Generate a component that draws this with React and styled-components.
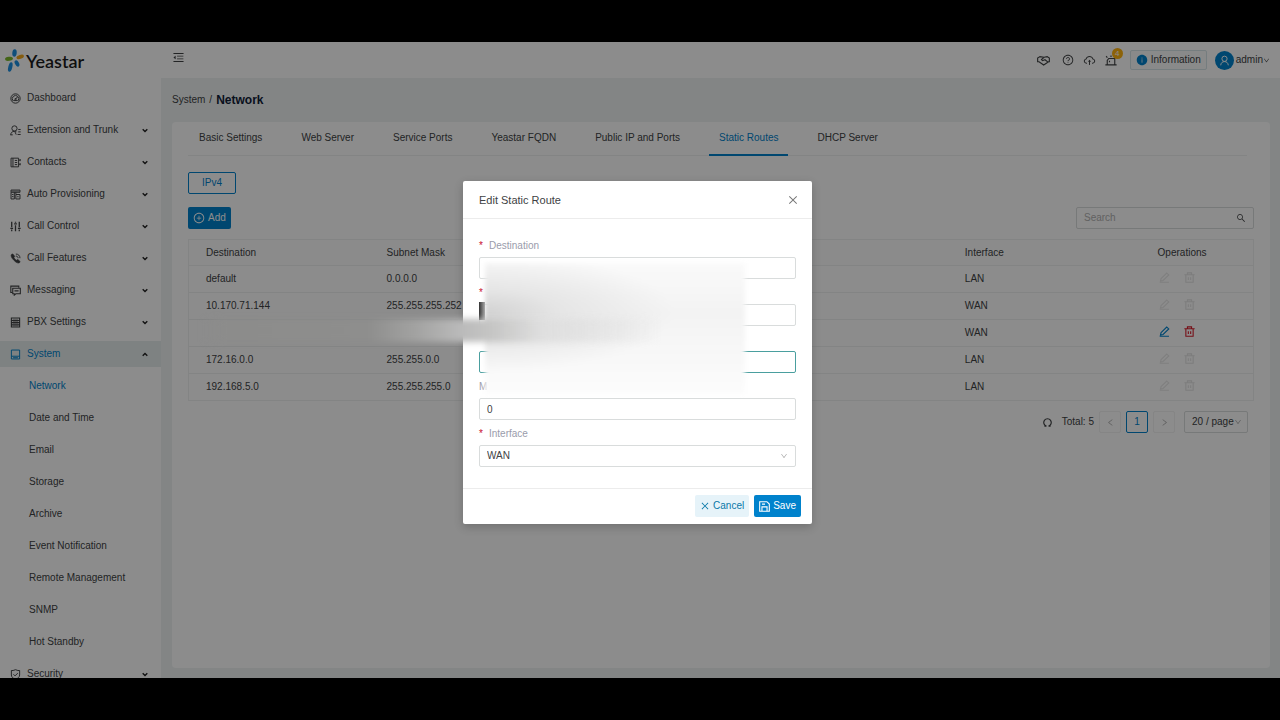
import React, { useState } from "react";
import styled, { createGlobalStyle } from "styled-components";
import {
  AiOutlineMenuFold,
  AiOutlineQuestionCircle,
  AiOutlineCloudUpload,
  AiOutlinePlusCircle,
  AiOutlineSearch,
  AiOutlineClose,
  AiOutlineDown,
  AiOutlineLeft,
  AiOutlineRight,
  AiFillInfoCircle,
} from "react-icons/ai";

const GlobalStyle = createGlobalStyle`
  * {
    box-sizing: border-box;
  }

  body {
    margin: 0;
    background: #000;
    color: #404244;
    font-family: "Liberation Sans", Arial, sans-serif;
    font-size: 10px;
    line-height: 16px;
  }

  button, input, select {
    font: inherit;
    color: inherit;
    margin: 0;
  }

  a {
    color: inherit;
    text-decoration: none;
  }
`;

const PRIMARY = "#0082cc";
const BORDER = "#d9dcdc";
const LINE = "#eff1f1";

const Screen = styled.div`
  height: 100vh;
  padding: 42px 0;
`;

const Stage = styled.div`
  position: relative;
  display: flex;
  height: 100%;
  overflow: hidden;
  background: #eff3f3;
`;

/* ---------- sidebar ---------- */

const Sidebar = styled.aside`
  flex: none;
  width: 161px;
  background: #fff;
  overflow: hidden;
`;

const Brand = styled.a`
  display: flex;
  align-items: center;
  gap: 2px;
  height: 38px;
  padding-left: 5px;
  color: #1c1c1c;
  font-family: Lato, sans-serif;
  font-size: 18px;
  font-weight: 600;
`;

const MenuList = styled.ul`
  display: grid;
  gap: 6px;
  margin: 0;
  padding: 5px 0 0;
  list-style: none;
`;

const MenuLink = styled.a`
  display: flex;
  align-items: center;
  gap: 6px;
  height: 26px;
  padding: 0 13px 0 ${(props) => (props.$sub ? "29px" : "10px")};
  color: ${(props) => (props.$active ? PRIMARY : "inherit")};
  ${(props) => props.$open && `background: #e6eded; color: ${PRIMARY};`}
`;

const MenuText = styled.span`
  flex: 1;
  white-space: nowrap;
`;

const Chevron = styled.svg`
  color: #222;
  transform: ${(props) => (props.$up ? "rotate(180deg)" : "none")};
`;

/* ---------- header ---------- */

const Main = styled.div`
  flex: 1;
  min-width: 0;
  display: flex;
  flex-direction: column;
`;

const Header = styled.header`
  display: flex;
  align-items: center;
  justify-content: space-between;
  height: 36px;
  padding: 0 10px 0 11px;
  background: #fff;
`;

const HeaderTools = styled.div`
  display: flex;
  align-items: center;
  gap: 9px;
`;

const IconButton = styled.button`
  position: relative;
  display: flex;
  align-items: center;
  padding: 0;
  border: 0;
  background: none;
  color: ${(props) => props.$color || "#404244"};
  cursor: pointer;
`;

const MenuToggle = styled(IconButton)`
  align-self: flex-start;
  height: 31px;
`;

const PartnerButton = styled(IconButton)`
  margin-right: 3px;
`;

const Badge = styled.span`
  position: absolute;
  top: -6px;
  right: -6px;
  width: 11px;
  height: 11px;
  border-radius: 50%;
  background: #ffb310;
  color: #fff;
  font-size: 8px;
  line-height: 11px;
  text-align: center;
`;

const InfoButton = styled.button`
  display: flex;
  align-items: center;
  gap: 3px;
  height: 20px;
  margin-left: 4px;
  padding: 0 5px;
  border: 1px solid #d5e4e8;
  border-radius: 2px;
  background: #f9fbfb;

  svg {
    color: ${PRIMARY};
  }
`;

const UserButton = styled.button`
  display: flex;
  align-items: center;
  margin-left: -1px;
  padding: 0;
  border: 0;
  background: none;
`;

const Avatar = styled.span`
  display: flex;
  align-items: center;
  justify-content: center;
  width: 19px;
  height: 19px;
  margin-right: 2px;
  border-radius: 50%;
  background: ${PRIMARY};
  color: #fff;
`;

/* ---------- content ---------- */

const Content = styled.main`
  flex: 1;
  display: flex;
  flex-direction: column;
  padding: 0 10px 10px 11px;
`;

const Breadcrumb = styled.nav`
  display: flex;
  align-items: center;
  gap: 4px;
  height: 44px;

  strong {
    color: #102038;
    font-size: 12px;
  }
`;

const Card = styled.section`
  flex: 1;
  padding: 0 16px;
  border-radius: 4px;
  background: #fff;
`;

const Tabs = styled.div`
  display: flex;
  gap: 19px;
  height: 34px;
  margin-right: 7px;
  padding-left: 1px;
  border-bottom: 1px solid ${LINE};
`;

const Tab = styled.button`
  height: 34px;
  padding: 0 10px;
  border: 0;
  border-bottom: 2px solid ${(props) => (props.$active ? PRIMARY : "transparent")};
  background: none;
  color: ${(props) => (props.$active ? PRIMARY : "inherit")};
  cursor: pointer;
`;

const ProtocolButton = styled.button`
  display: block;
  width: 48px;
  height: 22px;
  margin: 16px 0 13px;
  padding: 0;
  border: 1px solid ${PRIMARY};
  border-radius: 2px;
  background: #fff;
  color: ${PRIMARY};
`;

const Toolbar = styled.div`
  display: flex;
  justify-content: space-between;
  margin-bottom: 10px;
`;

const Button = styled.button`
  display: flex;
  align-items: center;
  justify-content: center;
  gap: 3px;
  height: 22px;
  padding: 0 5px;
  border: 0;
  border-radius: 2px;
  background: ${(props) => (props.$light ? "#e6f3f9" : PRIMARY)};
  color: ${(props) => (props.$light ? "#0878a8" : "#fff")};
  cursor: pointer;
`;

const SearchBox = styled.div`
  display: flex;
  align-items: center;
  width: 178px;
  height: 22px;
  padding: 0 7px;
  border: 1px solid ${BORDER};
  border-radius: 2px;

  input {
    flex: 1;
    min-width: 0;
    padding: 0;
    border: 0;
    outline: 0;
    background: none;
  }

  input::placeholder {
    color: #b2b2b2;
  }
`;

const Table = styled.table`
  width: 100%;
  table-layout: fixed;
  border-collapse: collapse;
  border: 1px solid ${LINE};

  th,
  td {
    height: 27px;
    padding: 0 0 0 17px;
    border-bottom: 1px solid ${LINE};
    font-weight: normal;
    text-align: left;
    vertical-align: middle;
    white-space: nowrap;
  }

  th {
    height: 26px;
    background: #fdfdfd;
  }
`;

const Col = styled.col`
  width: ${(props) => props.$width};
`;

const Operations = styled.div`
  display: flex;
  align-items: center;
  gap: 14px;
  padding: 0 0 4px 1px;
`;

const Pagination = styled.div`
  display: flex;
  align-items: center;
  justify-content: flex-end;
  gap: 5px;
  padding: 10px 6px 0 0;
`;

const Total = styled.span`
  margin: 0 0 0 4px;
`;

const PageButton = styled.button`
  display: flex;
  align-items: center;
  justify-content: center;
  width: 22px;
  height: 22px;
  padding: 0;
  border: 1px solid ${(props) => (props.$active ? PRIMARY : "#f2f2f2")};
  border-radius: 2px;
  background: none;
  color: ${(props) => (props.$active ? PRIMARY : "#aaa")};
`;

const SelectWrap = styled.div`
  position: relative;
  color: #aaa;

  select {
    width: 100%;
    height: 22px;
    padding: 0 7px;
    border: 1px solid ${BORDER};
    border-radius: 2px;
    outline: 0;
    background: #fff;
    color: #404244;
    appearance: none;
  }

  svg {
    position: absolute;
    top: 7px;
    right: 8px;
    pointer-events: none;
  }
`;

const PageSize = styled(SelectWrap)`
  width: 64px;
  margin-left: 4px;

  svg {
    right: 6px;
  }
`;

/* ---------- dialog ---------- */

const Mask = styled.div`
  position: absolute;
  inset: 0;
  display: flex;
  align-items: flex-start;
  justify-content: center;
  padding: 139px 5px 0 0;
  background: rgba(0, 0, 0, 0.45);
`;

const Dialog = styled.form`
  position: relative;
  width: 349px;
  border-radius: 2px;
  background: #fff;
  box-shadow: 0 3px 10px rgba(0, 0, 0, 0.2);
`;

const DialogHeader = styled.div`
  display: flex;
  align-items: center;
  justify-content: space-between;
  height: 38px;
  padding: 0 13px 0 16px;
  border-bottom: 1px solid #ececec;

  h2 {
    margin: 0;
    font-size: 11px;
    font-weight: normal;
  }
`;

const DialogBody = styled.div`
  display: grid;
  gap: 3px;
  padding: 16px 16px 21px;
`;

const Field = styled.div`
  label {
    display: flex;
    align-items: center;
    height: 22px;
    color: #9a9cab;
  }

  > input {
    display: block;
    width: 100%;
    height: 22px;
    padding: 0 7px;
    border: 1px solid ${BORDER};
    border-radius: 2px;
    outline: 0;
  }

  > input:focus {
    border-color: #4a9f9f;
  }
`;

const Required = styled.span`
  width: 10px;
  color: #c8102e;
`;

const DialogFooter = styled.div`
  display: flex;
  justify-content: flex-end;
  gap: 5px;
  padding: 6px 11px 7px;
  border-top: 1px solid #ececec;
`;

const Smudge = styled.div`
  position: absolute;
  top: 82px;
  left: 22px;
  width: 260px;
  height: 131px;
  background: radial-gradient(
      ellipse at 0% 38%,
      #d2d2d2 0%,
      rgba(226, 226, 226, 0.8) 20%,
      rgba(242, 242, 242, 0) 52%
    ),
    linear-gradient(#fafafa, #f3f3f3 38%, #f7f7f7 65%, #fcfcfc);
  filter: blur(2px);
`;

const SmudgeCorner = styled.div`
  position: absolute;
  top: 121px;
  left: 16px;
  width: 6px;
  height: 18px;
  background: linear-gradient(90deg, #333, #aaa);
`;

const SmudgeBand = styled.div`
  position: absolute;
  top: 138px;
  left: -260px;
  width: 460px;
  height: 23px;
  background: linear-gradient(
    90deg,
    rgba(140, 140, 139, 0),
    #8c8c8b 4%,
    #8e8e8d 36%,
    #a2a2a1 46%,
    #bababa 56%,
    #c6c6c5 63%,
    rgba(222, 222, 222, 0.9) 74%,
    rgba(240, 240, 240, 0)
  );
  filter: blur(3px);
`;

/* ---------- icons ---------- */

const Line = ({ children, size = 11 }) => (
  <svg
    width={size}
    height={size}
    viewBox="0 0 16 16"
    fill="none"
    stroke="currentColor"
    strokeWidth="1.4"
    aria-hidden="true"
  >
    {children}
  </svg>
);

const icons = {
  dashboard: (
    <>
      <circle cx="8" cy="8" r="6.8" />
      <path d="M4.5 11.5a4.7 4.7 0 1 1 7 0M5 11h6M8 9l3-3.5" />
      <circle cx="8" cy="9" r="1" />
    </>
  ),
  extension: (
    <>
      <circle cx="6.5" cy="5" r="3.8" />
      <path d="M1 14.8c0-3.5 2-5.6 5.5-5.6 1 0 2 .2 2.8.7M1 14.3h3M7 9.5l2 4.5M12 6.5h3.5M12 10h3.5M11 13.8h4.5" />
    </>
  ),
  contacts: (
    <>
      <path d="M1.5 1.7h11v12.6h-11zM4.3 1.7v12.6M14.8 3v3M14.8 9v3M12.5 4.5h2.3M12.5 10.5h2.3" />
      <path d="M7 5h3.4M7 8h3.4M7 11h3.4" />
    </>
  ),
  provisioning: (
    <>
      <path d="M1.5 1.5h13v3.3h-13zM1.5 4.8v9.7h4.8V4.8M8.5 8h6v6.5h-6zM8.5 4.8v3" />
      <path d="M3 8h2M3 11h2M10.5 11.2h2" />
      <path d="M2 3.2h12" strokeWidth="1" />
    </>
  ),
  control: (
    <>
      <path d="M2.5 1v8M2.5 12.5V15M8 1v1.5M8 6v9M13.5 1v8M13.5 12.5V15" strokeWidth="1.9" />
      <path d="M.5 10.7h4M6 4.2h4M11.5 10.7h4" strokeWidth="2" />
    </>
  ),
  features: (
    <>
      <path
        d="M2 2.2c1-.9 2.2-1 2.8-.2l1.7 2.3c.5.8.3 1.5-.8 2.4.8 1.8 2 3 3.7 3.8.9-1.1 1.7-1.2 2.4-.7l2.2 1.7c.8.7.7 1.7-.2 2.6C12.5 15.3 9.5 14.6 6 11 2 7.2.9 4 2 2.2z"
        fill="currentColor"
        strokeWidth="0.8"
      />
      <path d="M8.5 1.5c3.5 0 6 2.3 6 6M8.500 4.500c2 0 3.200 1.200 3.200 3" />
    </>
  ),
  messaging: (
    <>
      <path d="M3.5 11H1.2V1.7h11.6v2.300" strokeWidth="1.6" />
      <path d="M4 4.7h11v8H8.5l-2.3 2v-2H4zM6.5 8.5h6" strokeWidth="1.6" />
    </>
  ),
  pbx: (
    <>
      <path d="M2 1.5h12v13H2zM2 5h12M2 8.2h12M2 11.4h12" strokeWidth="1.6" />
      <path d="M4 3.3h8M4 6.6h8M4 9.8h8M4 13h8" opacity="0.5" />
    </>
  ),
  system: <path d="M2 1.5h12v13H2zM2 10.5h12M4.5 12.7h7" />,
  security: (
    <path d="M2 2.2h2.5L8 1l3.5 1.2H14v6.5c0 3-2.2 4.8-6 6.3-3.8-1.5-6-3.3-6-6.3zM5 7.7l2.3 2.3L11.3 6" />
  ),
};

const PenIcon = () => (
  <Line>
    <path d="M3 9.5 11.2 1.5l3 2.8-8.3 8-3.7.7zM1 15h13.5" strokeWidth="1.6" />
  </Line>
);

const TrashIcon = () => (
  <Line>
    <path d="M.5 4h15M2.7 4v11h10.6V4M5 4V1.2h6V4M6.3 7.5v4M9.7 7.5v4" strokeWidth="1.6" />
  </Line>
);

const SaveIcon = () => (
  <Line>
    <path d="M1 1h10.5L15 4.5V15H1zM4.3 15V8.5h7.4V15M4.3 4.5h4.5" strokeWidth="1.6" />
  </Line>
);

const LogoMark = () => (
  <svg width="19" height="24" viewBox="0 0 19 24" aria-hidden="true">
    <ellipse cx="9.5" cy="4" rx="2.2" ry="3.7" fill="#1c8fe0" transform="rotate(6 9.5 4)" />
    <ellipse cx="4" cy="9.8" rx="4" ry="2" fill="#7db82b" transform="rotate(-8 4 9.8)" />
    <ellipse cx="15.2" cy="7.9" rx="3.9" ry="2" fill="#f2a81d" transform="rotate(-18 15.2 7.9)" />
    <ellipse cx="5.3" cy="18" rx="2" ry="4.9" fill="#1c8fe0" transform="rotate(14 5.3 18)" />
    <ellipse cx="12" cy="14.4" rx="2" ry="3.4" fill="#1c8fe0" transform="rotate(-28 12 14.4)" />
  </svg>
);

const menu = [
  { icon: "dashboard", text: "Dashboard" },
  { icon: "extension", text: "Extension and Trunk", group: true },
  { icon: "contacts", text: "Contacts", group: true },
  { icon: "provisioning", text: "Auto Provisioning", group: true },
  { icon: "control", text: "Call Control", group: true },
  { icon: "features", text: "Call Features", group: true },
  { icon: "messaging", text: "Messaging", group: true },
  { icon: "pbx", text: "PBX Settings", group: true },
  { icon: "system", text: "System", group: true, open: true },
  { text: "Network", sub: true, active: true },
  { text: "Date and Time", sub: true },
  { text: "Email", sub: true },
  { text: "Storage", sub: true },
  { text: "Archive", sub: true },
  { text: "Event Notification", sub: true },
  { text: "Remote Management", sub: true },
  { text: "SNMP", sub: true },
  { text: "Hot Standby", sub: true },
  { icon: "security", text: "Security", group: true },
];

const tabs = [
  "Basic Settings",
  "Web Server",
  "Service Ports",
  "Yeastar FQDN",
  "Public IP and Ports",
  "Static Routes",
  "DHCP Server",
];

const routes = [
  { destination: "default", mask: "0.0.0.0", port: "LAN" },
  { destination: "10.170.71.144", mask: "255.255.255.252", port: "WAN" },
  { destination: "", mask: "", port: "WAN", editable: true },
  { destination: "172.16.0.0", mask: "255.255.0.0", port: "LAN" },
  { destination: "192.168.5.0", mask: "255.255.255.0", port: "LAN" },
];

function MenuItem({ item }) {
  return (
    <li>
      <MenuLink href="#" $sub={item.sub} $active={item.active} $open={item.open}>
        {item.icon && <Line>{icons[item.icon]}</Line>}
        <MenuText>{item.text}</MenuText>
        {item.group && (
          <Chevron $up={item.open} width="6" height="5" viewBox="0 0 6 5" fill="none">
            <path d="M.7 1.2 3 3.5 5.3 1.2" stroke="currentColor" strokeWidth="1.4" />
          </Chevron>
        )}
      </MenuLink>
    </li>
  );
}

function TopBar() {
  return (
    <Header>
      <MenuToggle aria-label="Collapse menu">
        <AiOutlineMenuFold size={13} />
      </MenuToggle>
      <HeaderTools>
        <PartnerButton aria-label="Partners">
          <Line size={13}>
            <path
              d="M3.500 3.200.8 5v4.500h1.700l5.700 4 6-4h1V5l-2.700-1.800L8.700 4zM8.700 4 5.500 6.800l1.300 1.400 3-1.200 3.800 3"
              strokeWidth="1.4"
            />
          </Line>
        </PartnerButton>
        <IconButton aria-label="Help">
          <AiOutlineQuestionCircle size={12} />
        </IconButton>
        <IconButton aria-label="Upload">
          <AiOutlineCloudUpload size={13} />
        </IconButton>
        <IconButton aria-label="Alarms">
          <Line size={12}>
            <path
              d="M3 14V8.500L5 6h8v8M.5 14.500h15M8 2v2M1.500 3l1.700 1.700M6 11V9"
              strokeWidth="1.5"
            />
          </Line>
          <Badge>4</Badge>
        </IconButton>
        <InfoButton>
          <AiFillInfoCircle size={12} />
          Information
        </InfoButton>
        <UserButton>
          <Avatar>
            <Line size={11}>
              <circle cx="8" cy="5.5" r="3.8" />
              <path d="M2.500 15c.3-3.500 2.300-5.400 5.500-5.400s5.200 1.900 5.500 5.400" />
            </Line>
          </Avatar>
          admin
          <AiOutlineDown size={7} />
        </UserButton>
      </HeaderTools>
    </Header>
  );
}

function RouteTable() {
  return (
    <Table>
      <colgroup>
        <Col $width="17%" />
        <Col $width="54.3%" />
        <Col $width="18.1%" />
        <Col $width="10.6%" />
      </colgroup>
      <thead>
        <tr>
          <th>Destination</th>
          <th>Subnet Mask</th>
          <th>Interface</th>
          <th>Operations</th>
        </tr>
      </thead>
      <tbody>
        {routes.map((route, index) => (
          <tr key={index}>
            <td>{route.destination}</td>
            <td>{route.mask}</td>
            <td>{route.port}</td>
            <td>
              <Operations>
                <IconButton
                  aria-label="Edit"
                  disabled={!route.editable}
                  $color={route.editable ? PRIMARY : "#e8e8e8"}
                >
                  <PenIcon />
                </IconButton>
                <IconButton
                  aria-label="Delete"
                  disabled={!route.editable}
                  $color={route.editable ? "#d81e2c" : "#e4e4e4"}
                >
                  <TrashIcon />
                </IconButton>
              </Operations>
            </td>
          </tr>
        ))}
      </tbody>
    </Table>
  );
}

function EditDialog() {
  const [metric, setMetric] = useState("0");
  return (
    <Dialog onSubmit={(e) => e.preventDefault()}>
      <DialogHeader>
        <h2>Edit Static Route</h2>
        <IconButton type="button" aria-label="Close" $color="#777">
          <AiOutlineClose size={12} />
        </IconButton>
      </DialogHeader>
      <DialogBody>
        <Field>
          <label htmlFor="destination">
            <Required>*</Required>Destination
          </label>
          <input id="destination" />
        </Field>
        <Field>
          <label htmlFor="mask">
            <Required>*</Required>
          </label>
          <input id="mask" aria-label="Subnet Mask" />
        </Field>
        <Field>
          <label htmlFor="gateway" />
          <input id="gateway" aria-label="Gateway" autoFocus />
        </Field>
        <Field>
          <label htmlFor="metric">M</label>
          <input
            id="metric"
            value={metric}
            onChange={(e) => setMetric(e.target.value)}
          />
        </Field>
        <Field>
          <label htmlFor="interface">
            <Required>*</Required>Interface
          </label>
          <SelectWrap>
            <select id="interface" defaultValue="WAN">
              <option>WAN</option>
              <option>LAN</option>
            </select>
            <AiOutlineDown size={8} />
          </SelectWrap>
        </Field>
      </DialogBody>
      <DialogFooter>
        <Button type="button" $light>
          <AiOutlineClose size={10} />
          Cancel
        </Button>
        <Button type="submit">
          <SaveIcon />
          Save
        </Button>
      </DialogFooter>
      <Smudge />
      <SmudgeCorner />
      <SmudgeBand />
    </Dialog>
  );
}

export default function App() {
  const [tab, setTab] = useState("Static Routes");
  return (
    <Screen>
      <GlobalStyle />
      <Stage>
        <Sidebar>
          <Brand href="#">
            <LogoMark />
            Yeastar
          </Brand>
          <MenuList>
            {menu.map((item) => (
              <MenuItem key={item.text} item={item} />
            ))}
          </MenuList>
        </Sidebar>
        <Main>
          <TopBar />
          <Content>
            <Breadcrumb>
              <a href="#">System</a>
              <span>/</span>
              <strong>Network</strong>
            </Breadcrumb>
            <Card>
              <Tabs>
                {tabs.map((name) => (
                  <Tab key={name} $active={name === tab} onClick={() => setTab(name)}>
                    {name}
                  </Tab>
                ))}
              </Tabs>
              <ProtocolButton>IPv4</ProtocolButton>
              <Toolbar>
                <Button>
                  <AiOutlinePlusCircle size={12} />
                  Add
                </Button>
                <SearchBox>
                  <input placeholder="Search" aria-label="Search" />
                  <AiOutlineSearch size={10} />
                </SearchBox>
              </Toolbar>
              <RouteTable />
              <Pagination>
                <IconButton aria-label="Refresh">
                  <Line>
                    <path
                      d="M6.500 13.300a5.500 5.500 0 1 1 3 0M3.500 13.300h3M12.500 13.300h-3"
                      strokeWidth="1.7"
                    />
                  </Line>
                </IconButton>
                <Total>Total: 5</Total>
                <PageButton aria-label="Previous page" disabled>
                  <AiOutlineLeft size={9} />
                </PageButton>
                <PageButton $active>1</PageButton>
                <PageButton aria-label="Next page" disabled>
                  <AiOutlineRight size={9} />
                </PageButton>
                <PageSize>
                  <select aria-label="Page size">
                    <option>20 / page</option>
                  </select>
                  <AiOutlineDown size={8} />
                </PageSize>
              </Pagination>
            </Card>
          </Content>
        </Main>
        <Mask>
          <EditDialog />
        </Mask>
      </Stage>
    </Screen>
  );
}
